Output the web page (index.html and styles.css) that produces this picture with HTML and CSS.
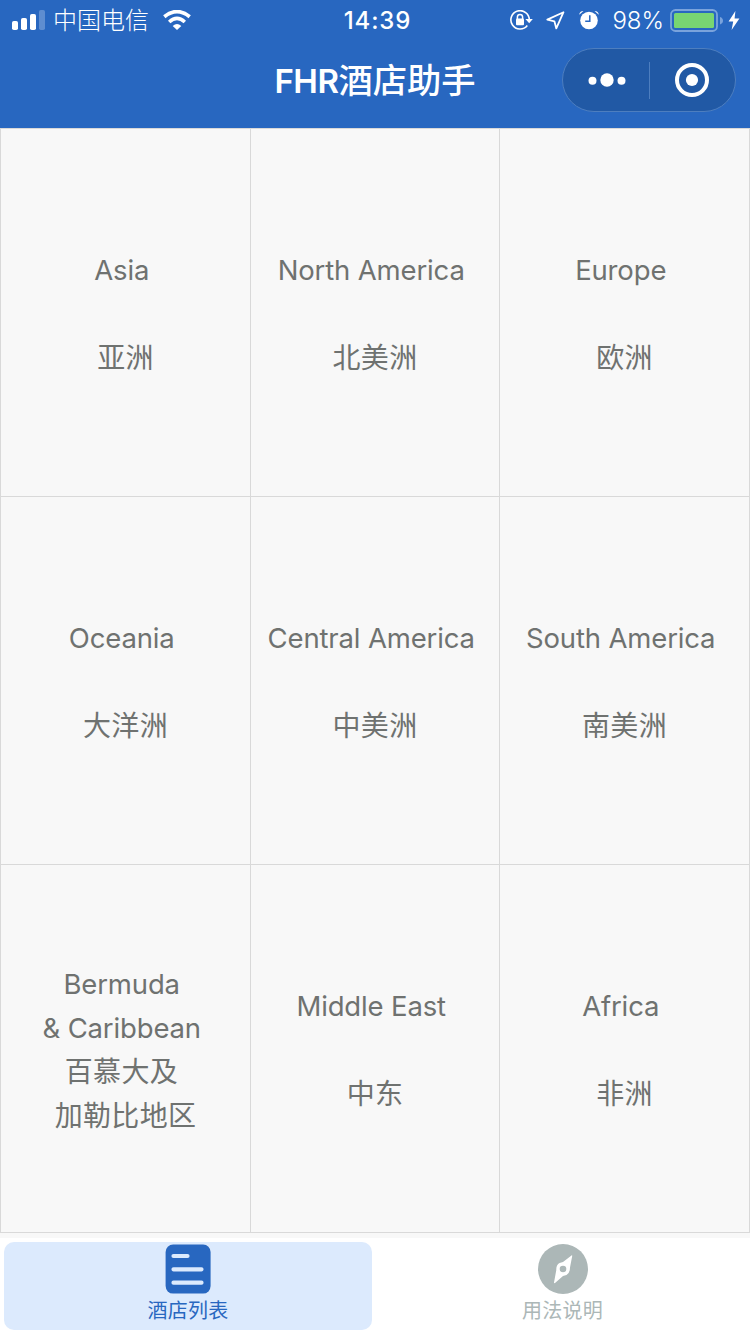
FILE: index.html
```html
<!DOCTYPE html>
<html lang="zh-CN">

<head>
	<meta charset="UTF-8">
	<title>FHR酒店助手</title>
	<link rel="stylesheet" href="styles.css">
</head>

<body>
	<header class="header">
		<div class="status-bar">
			<div class="status-left">
				<svg class="signal" width="33" height="20" viewBox="0 0 33 20" fill="#fff">
					<rect x="0" y="11" width="6" height="9" rx="1.8" />
					<rect x="9" y="8" width="6" height="12" rx="1.8" />
					<rect x="18" y="4" width="6" height="16" rx="1.8" />
					<rect x="27" y="0" width="6" height="20" rx="1.8" opacity="0.25" />
				</svg>
				<span class="carrier">中国电信</span>
				<svg class="wifi" width="28" height="20" viewBox="0 0 28 20">
					<path d="M1.3 6.7Q14-3.5 26.7 6.7" fill="none" stroke="#fff" stroke-width="3.7" />
					<path d="M6.2 12Q14 4.9 21.8 12" fill="none" stroke="#fff" stroke-width="3.6" />
					<path d="M9.7 15.9Q14 11.9 18.3 15.9L14 20Z" fill="#fff" />
				</svg>
			</div>
			<span class="clock">14:39</span>
			<div class="status-right">
				<svg class="lock" width="23" height="20" viewBox="0 0 23 20">
					<path d="M17.300 15.600A9.200 9.200 0 1 1 19.300 10" fill="none" stroke="#fff" stroke-width="1.6" />
					<path d="M15.400 9H22.800L19.200 13.200Z" fill="#fff" />
					<path d="M7.400 9V7a2.600 2.600 0 0 1 5.200 0V9" fill="none" stroke="#fff" stroke-width="1.5" />
					<rect x="6" y="8.400" width="8" height="6.800" rx="1" fill="#fff" />
				</svg>
				<svg class="location" width="19" height="19" viewBox="0 0 19 19">
					<path d="M17.500 1.200L1.300 8.600L8.400 10.300L10.300 17.400Z" fill="none" stroke="#fff" stroke-width="1.8" stroke-linejoin="round" />
				</svg>
				<svg class="alarm" width="20" height="20" viewBox="0 0 20 20">
					<circle cx="10" cy="10.500" r="8.800" fill="#fff" />
					<path d="M.2 4.700Q.5.900 4.500.900ZM19.800 4.700Q19.500.900 15.500.900Z" fill="#fff" />
					<path d="M10.800 5.200V11.300H6.200" fill="none" stroke="#2867c0" stroke-width="1.5" />
				</svg>
				<span class="percent">98%</span>
				<svg class="battery" width="53" height="23" viewBox="0 0 53 23">
					<rect x="1" y="1" width="46" height="21" rx="4.500" fill="none" stroke="#7aa3dc" stroke-width="1.8" />
					<rect x="4" y="4" width="40" height="15" rx="1.500" fill="#78d572" />
					<path d="M50 8Q53 9 53 11.700T50 15.400Z" fill="#7aa3dc" />
				</svg>
				<svg class="bolt" width="12" height="19" viewBox="0 0 12 19">
					<path d="M7.400 0L.6 10.600H5.200L3.600 19L11.400 7.600H6.600Z" fill="#fff" />
				</svg>
			</div>
		</div>
		<div class="nav-bar">
			<h1 class="title"><span class="latin">FHR</span>酒店助手</h1>
			<div class="capsule">
				<svg class="more" width="38" height="14" viewBox="0 0 38 14" fill="#fff">
					<circle cx="4.500" cy="7.700" r="4" />
					<circle cx="19" cy="7" r="6.700" />
					<circle cx="33.500" cy="7.700" r="4" />
				</svg>
				<span class="divider"></span>
				<svg class="close" width="34" height="34" viewBox="0 0 34 34">
					<circle cx="17" cy="17" r="15" fill="none" stroke="#fff" stroke-width="4" />
					<circle cx="17" cy="17" r="6.100" fill="#fff" />
				</svg>
			</div>
		</div>
	</header>

	<main class="regions">
		<!-- 名称后面的空格保留，参与居中 -->
		<div class="region"><span class="en">Asia </span><span class="zh">亚洲</span></div>
		<div class="region"><span class="en">North America </span><span class="zh">北美洲</span></div>
		<div class="region"><span class="en">Europe </span><span class="zh">欧洲</span></div>
		<div class="region"><span class="en">Oceania </span><span class="zh">大洋洲</span></div>
		<div class="region"><span class="en">Central America </span><span class="zh">中美洲</span></div>
		<div class="region"><span class="en">South America </span><span class="zh">南美洲</span></div>
		<div class="region compact"><span class="en">Bermuda </span><span class="en">&amp; Caribbean </span><span class="zh">百慕大及 </span><span class="zh">加勒比地区</span></div>
		<div class="region"><span class="en">Middle East </span><span class="zh">中东</span></div>
		<div class="region"><span class="en">Africa </span><span class="zh">非洲</span></div>
	</main>

	<nav class="tab-bar">
		<div class="tab active">
			<svg width="50" height="50" viewBox="0 0 50 50">
				<rect x="2.600" y=".6" width="45" height="49" rx="7.500" fill="#2867c0" />
				<path d="M10.500 12H24.500M10.500 25.300H38.500M10.500 38.700H38.500" stroke="#dceafd" stroke-width="4.200" stroke-linecap="round" />
			</svg>
			<span>酒店列表</span>
		</div>
		<div class="tab">
			<svg width="50" height="50" viewBox="0 0 50 50">
				<circle cx="25" cy="25" r="25" fill="#acb7b7" />
				<path d="M33.800 11.200Q34.300 11 34.200 12L32 23.500Q32 29 28.500 31L25 32L17 39Q16 39.500 16 38.500L18.300 26Q18 21 21.500 19L25 18Z" fill="#fff" />
				<circle cx="25" cy="25" r="3.300" fill="#acb7b7" />
			</svg>
			<span>用法说明</span>
		</div>
	</nav>
</body>

</html>
```
FILE: styles.css
```css
* {
	box-sizing: border-box;
}

body {
	margin: 0;
	height: 1334px;
	display: flex;
	flex-direction: column;
	background: #f8f8f8;
	font-family: Inter, "Noto Sans CJK SC", sans-serif;
	overflow: hidden;
}

svg {
	display: block;
	flex: none;
}

/* 顶部 */
.header {
	height: 128px;
	background: #2867c0;
	color: #fff;
}

.status-bar {
	height: 40px;
	padding: 0 10px 0 12px;
	display: grid;
	grid-template-columns: 1fr auto 1fr;
	align-items: center;
}

.status-left,
.status-right {
	display: flex;
	align-items: center;
}

.status-right {
	justify-content: flex-end;
}

.carrier,
.clock,
.percent {
	height: 40px;
	line-height: 42px;
	font-size: 24px;
}

.carrier {
	margin: 0 14px 0 8px;
	font-weight: 300;
}

.clock {
	margin-left: 3px;
	font-weight: 500;
	letter-spacing: 0.9px;
}

.location {
	margin-left: 13px;
}

.alarm {
	margin-left: 14px;
}

.percent {
	margin: 0 6px 0 13px;
	font-weight: 300;
}

.bolt {
	margin-left: 5px;
}

.nav-bar {
	height: 80px;
	padding: 0 14px;
	display: grid;
	grid-template-columns: 1fr auto 1fr;
	align-items: center;
}

.title {
	grid-column: 2;
	height: 80px;
	margin: 0;
	font-size: 34.3px;
	font-weight: 500;
	line-height: 82px;
}

.title .latin {
	font-size: 33px;
	font-weight: 600;
	letter-spacing: -0.5px;
}

.capsule {
	justify-self: end;
	width: 174px;
	height: 64px;
	padding: 0 26px 0 25px;
	display: flex;
	align-items: center;
	background: #2159a5;
	border: 1px solid #4d7ebf;
	border-radius: 32px;
}

.divider {
	width: 1px;
	height: 37px;
	margin: 0 25px 0 23px;
	background: #4d7ebf;
}

/* 地区九宫格 */
.regions {
	display: grid;
	grid-template-columns: 250px 249px 250px;
	grid-auto-rows: 368px;
	border-top: 1px solid #d9d9d9;
	border-left: 1px solid #d9d9d9;
}

.region {
	padding-top: 2px;
	display: flex;
	flex-direction: column;
	align-items: center;
	justify-content: center;
	gap: 44px;
	border-right: 1px solid #d9d9d9;
	border-bottom: 1px solid #d9d9d9;
	color: #6f7270;
	white-space: pre;
}

.region.compact {
	gap: 0;
}

.region span {
	height: 44px;
	line-height: 44px;
}

.en {
	font-size: 27.5px;
	letter-spacing: -0.15px;
}

.zh {
	font-size: 28px;
	letter-spacing: 0.3px;
}

/* 底部标签栏 */
.tab-bar {
	height: 96px;
	margin-top: auto;
	padding: 4px;
	display: grid;
	grid-template-columns: 368px 368px;
	justify-content: space-between;
	background: #fff;
}

.tab {
	padding-top: 2px;
	display: flex;
	flex-direction: column;
	align-items: center;
	border-radius: 10px;
	color: #acb7b7;
	font-size: 20px;
	letter-spacing: 0.2px;
	line-height: 34px;
}

.tab:last-child {
	padding-left: 1px;
}

.tab.active {
	background: #dceafd;
	color: #2867c0;
}
```
